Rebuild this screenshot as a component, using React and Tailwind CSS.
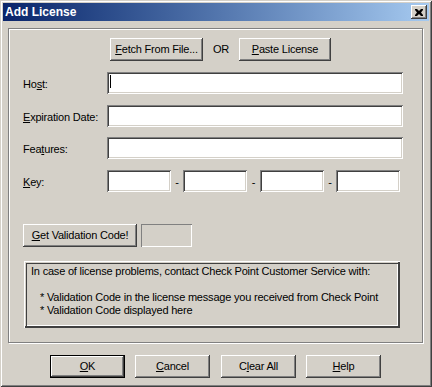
const raised =
  "shadow-[inset_-1px_-1px_#404040,inset_1px_1px_#ffffff,inset_-2px_-2px_#808080,inset_2px_2px_#d4d0c8]";
const sunken =
  "shadow-[inset_1px_1px_#808080,inset_-1px_-1px_#ffffff,inset_2px_2px_#404040,inset_-2px_-2px_#d4d0c8]";

function Btn({ children, className = "", isDefault = false }) {
  return (
    <div
      className={`flex h-[23px] items-center justify-center bg-[#d4d0c8] text-black ${raised} ${
        isDefault ? "border border-black" : ""
      } ${className}`}
    >
      <span className="leading-none">{children}</span>
    </div>
  );
}

function Field({ label, children }) {
  return (
    <div className="flex items-center pl-[14px]">
      <div className="w-[84px] pt-[2px]">{label}</div>
      {children}
    </div>
  );
}

function TextBox({ className = "", children }) {
  return <div className={`relative h-[22px] bg-white ${sunken} ${className}`}>{children}</div>;
}

function Dash({ className }) {
  return <div className={`pt-[3px] text-center ${className}`}>-</div>;
}

export default function App() {
  return (
    <div className="flex h-[387px] w-[432px] flex-col bg-[#d4d0c8] p-[3px] font-['Liberation_Sans',Arial,sans-serif] text-[11px] tracking-[-0.2px] text-black shadow-[inset_1px_1px_#d4d0c8,inset_-1px_-1px_#404040,inset_2px_2px_#ffffff,inset_-2px_-2px_#808080]">
      {/* title bar */}
      <div className="flex h-[18px] items-center bg-linear-to-r from-[#0a246a] to-[#a6caf0] pl-[2px] pr-[2px]">
        <span className="text-[12px] font-bold tracking-normal text-white">Add License</span>
        <div className={`ml-auto flex h-[14px] w-[16px] items-center justify-center bg-[#d4d0c8] ${raised}`}>
          <svg width="8" height="7" viewBox="0 0 8 7" className="mr-[1px]">
            <path d="M0 0h2l2 2 2-2h2v1L6 3.5 8 6v1H6L4 5 2 7H0V6l2-2.5L0 1z" fill="#000" />
          </svg>
        </div>
      </div>

      <div className="pl-[5px] pt-[7px]">
        {/* group box */}
        <div className="h-[315px] w-[415px] border border-[#808080] shadow-[1px_1px_0_#ffffff,inset_1px_1px_0_#ffffff]">
          <div className="mt-[9px] flex h-[23px] items-center pl-[101px]">
            <Btn className="w-[93px]">
              <u>F</u>etch From File...
            </Btn>
            <div className="w-[36px] text-center">OR</div>
            <Btn className="w-[92px]">
              <u>P</u>aste License
            </Btn>
          </div>

          <div className="mt-[11px]">
            <Field
              label={
                <>
                  Ho<u>s</u>t:
                </>
              }
            >
              <TextBox className="w-[296px]">
                <div className="absolute left-[3px] top-[3px] h-[13px] w-px bg-black" />
              </TextBox>
            </Field>
          </div>
          <div className="mt-[11px]">
            <Field
              label={
                <>
                  <u>E</u>xpiration Date:
                </>
              }
            >
              <TextBox className="w-[296px]" />
            </Field>
          </div>
          <div className="mt-[10px]">
            <Field
              label={
                <>
                  Fea<u>t</u>ures:
                </>
              }
            >
              <TextBox className="w-[296px]" />
            </Field>
          </div>
          <div className="mt-[11px]">
            <Field
              label={
                <>
                  <u>K</u>ey:
                </>
              }
            >
              <TextBox className="w-[64px]" />
              <Dash className="w-[12px]" />
              <TextBox className="w-[64px]" />
              <Dash className="w-[13px]" />
              <TextBox className="w-[64px]" />
              <Dash className="w-[12px]" />
              <TextBox className="w-[64px]" />
            </Field>
          </div>

          <div className="mt-[32px] flex pl-[14px]">
            <Btn className="w-[114px]">
              <u>G</u>et Validation Code!
            </Btn>
            <div className="ml-[4px] h-[23px] w-[51px] bg-[#d4d0c8] shadow-[inset_1px_1px_#808080,inset_-1px_-1px_#ffffff]" />
          </div>

          <div className="ml-[15px] mt-[14px] h-[67px] w-[376px] pl-[7px] pt-[4px] leading-[13px] shadow-[inset_1px_1px_#ffffff,inset_-1px_-1px_#404040,inset_-2px_-2px_#404040,inset_2px_2px_#d4d0c8,inset_3px_3px_#404040,inset_-3px_-3px_#ffffff]">
            <div>In case of license problems, contact Check Point Customer Service with:</div>
            <div className="h-[13px]" />
            <div className="pl-[9px]">* Validation Code in the license message you received from Check Point</div>
            <div className="pl-[9px]">* Validation Code displayed here</div>
          </div>
        </div>

        {/* bottom buttons */}
        <div className="mt-[12px] flex pl-[42px]">
          <Btn isDefault className="w-[75px]">
            <u>O</u>K
          </Btn>
          <Btn className="ml-[10px] w-[75px]">
            <u>C</u>ancel
          </Btn>
          <Btn className="ml-[11px] w-[75px]">
            C<u>l</u>ear All
          </Btn>
          <Btn className="ml-[10px] w-[75px]">
            <u>H</u>elp
          </Btn>
        </div>
      </div>
    </div>
  );
}
